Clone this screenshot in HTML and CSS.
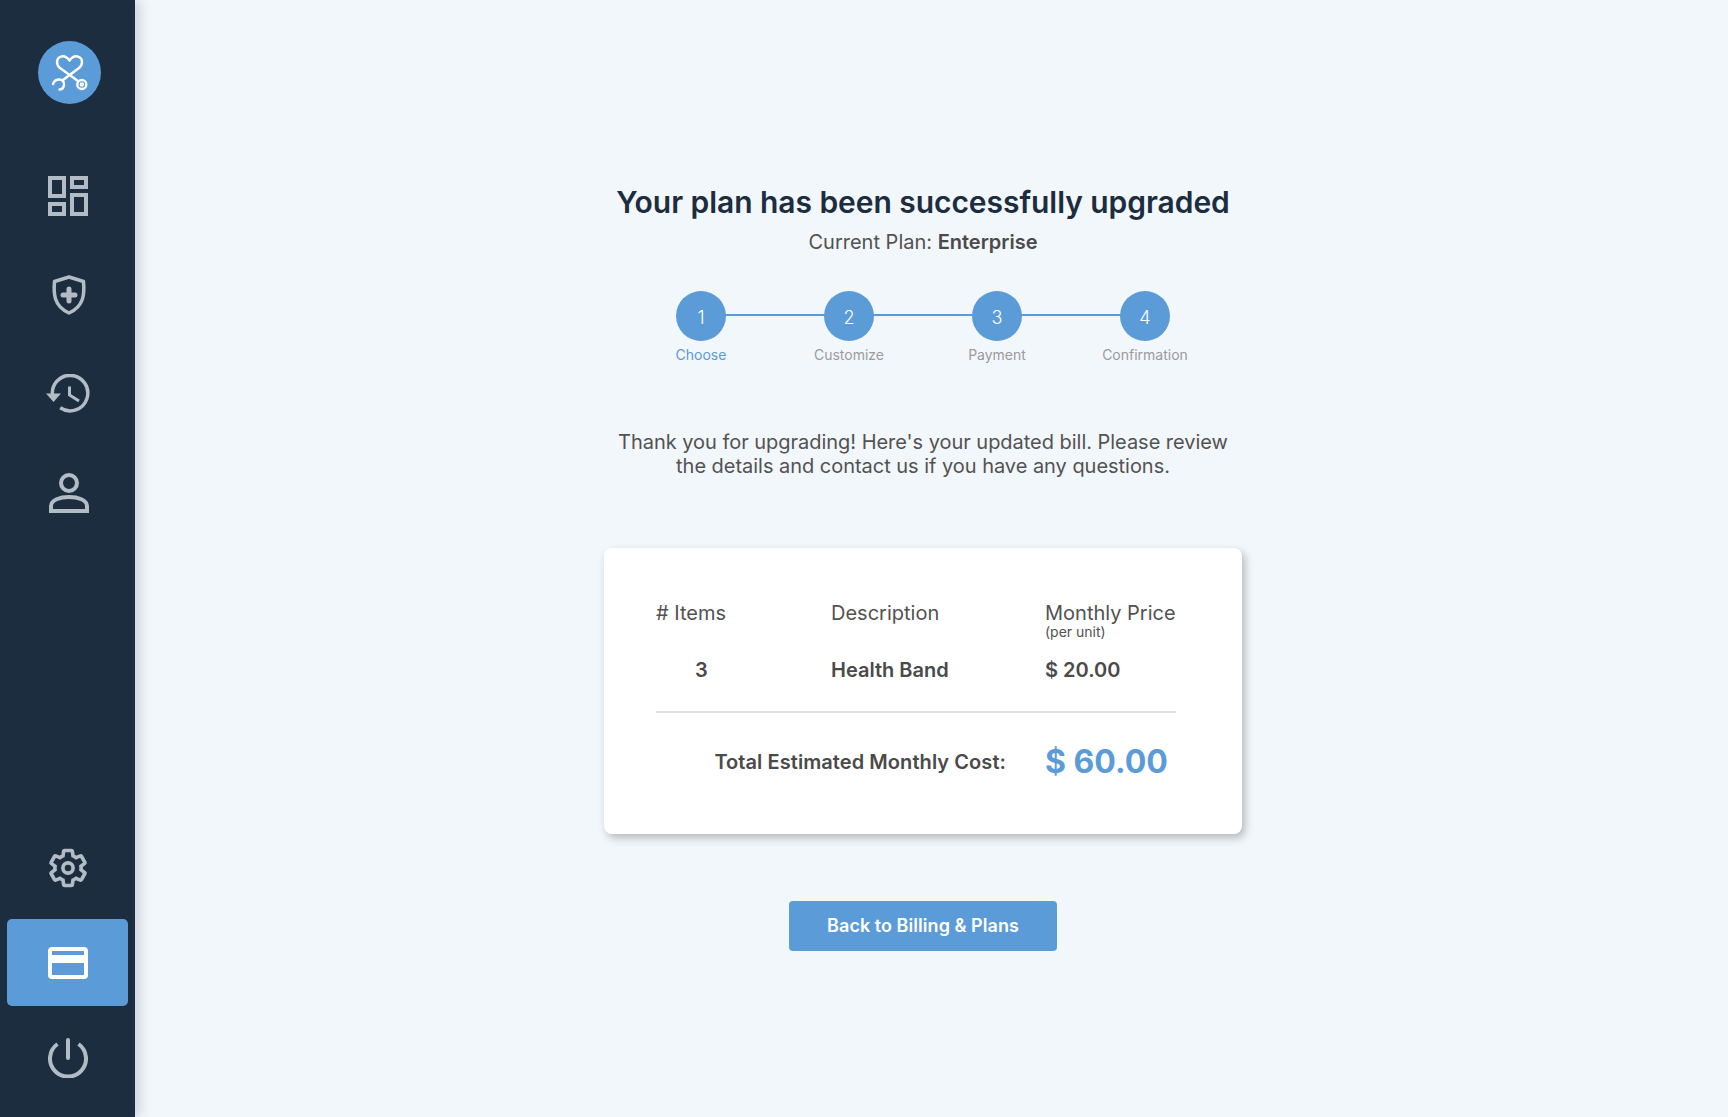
FILE: index.html
```html
<!DOCTYPE html>
<html lang="en">
<head>
    <meta charset="UTF-8">
    <title>Upgrade complete</title>
    <link rel="stylesheet" href="styles.css">
</head>
<body>
    <aside class="sidebar">
        <div class="logo">
            <svg width="40" height="40" viewBox="0 0 40 40" fill="none" stroke="#fff" stroke-width="2.400" stroke-linecap="round" stroke-linejoin="round">
                <path d="M28 28 L10 15 C6 11.500 6 6 10 4 C13.500 2.500 17 4 19.500 7.500 C22 4 25.500 2.500 29 4 C33 6 33 11.500 29 15 L13 27"/>
                <path d="M3 31 C4 28 7 26.500 9.500 26.500 C12.500 26.500 14.500 29 14 32 C13.500 35 11.500 36.500 9.500 36.500"/>
                <circle cx="31.800" cy="31.500" r="4.500"/>
                <circle cx="31.800" cy="31.500" r="1"/>
            </svg>
        </div>
        <nav class="nav-top">
            <a class="nav-icon">
                <svg width="40" height="40" viewBox="0 0 40 40" fill="none" stroke="#b3bcc5" stroke-width="4">
                    <rect x="2" y="2" width="14" height="18"/>
                    <rect x="2" y="28" width="14" height="10"/>
                    <rect x="24" y="2" width="14" height="9"/>
                    <rect x="24" y="19" width="14" height="19"/>
                </svg>
            </a>
            <a class="nav-icon shift">
                <svg width="40" height="40" viewBox="0 0 40 40" fill="none" stroke="#b3bcc5" stroke-width="3.500" stroke-linejoin="round">
                    <path d="M20 2 L34.500 6.500 C35.500 18 35.500 31 20 38 C4.500 31 4.500 18 5.500 6.500 Z"/>
                    <path d="M20 14 V26 M14 20 H26" stroke-width="5" stroke-linecap="round"/>
                </svg>
            </a>
            <a class="nav-icon shift">
                <svg width="46" height="40" viewBox="0 0 46 40" fill="none" stroke="#b3bcc5" stroke-width="3.500">
                    <path d="M6.800 23 A17.700 17.700 0 1 1 14.200 33.800"/>
                    <path d="M0 19.500 H15 L7.500 28 Z" fill="#b3bcc5" stroke="none"/>
                    <path d="M23.500 12.500 V21 L33 27" stroke-width="3"/>
                </svg>
            </a>
            <a class="nav-icon shift">
                <svg width="40" height="40" viewBox="0 0 40 40" fill="none" stroke="#b3bcc5" stroke-width="4">
                    <circle cx="20" cy="10" r="8"/>
                    <path d="M2 38 V33 C2 27 11 24 20 24 C29 24 38 27 38 33 V38 Z"/>
                </svg>
            </a>
        </nav>
        <nav class="nav-bottom">
            <a class="nav-icon">
                <svg width="40" height="40" viewBox="1 1 22 22" fill="none" stroke="#b3bcc5" stroke-width="2">
                    <path d="M19.140 12.940c.04-.3.06-.61.06-.94 0-.32-.02-.64-.07-.94l2.030-1.580c.18-.14.23-.41.12-.61l-1.920-3.320c-.12-.22-.37-.29-.59-.22l-2.390.96c-.5-.38-1.030-.7-1.620-.94l-.36-2.540c-.04-.24-.24-.41-.48-.41h-3.840c-.24 0-.43.17-.47.41l-.36 2.540c-.59.24-1.130.57-1.620.94l-2.390-.96c-.22-.08-.47 0-.59.22L2.740 8.870c-.12.21-.08.47.12.61l2.030 1.580c-.05.3-.09.63-.09.94s.02.64.07.94l-2.030 1.580c-.18.14-.23.41-.12.61l1.920 3.320c.12.22.37.29.59.22l2.390-.96c.5.38 1.030.7 1.620.94l.36 2.540c.05.24.24.41.48.41h3.840c.24 0 .44-.17.47-.41l.36-2.540c.59-.24 1.130-.56 1.620-.94l2.390.96c.22.08.47 0 .59-.22l1.920-3.320c.12-.22.07-.47-.12-.61l-2.010-1.580z"/>
                    <circle cx="12" cy="12" r="2.800"/>
                </svg>
            </a>
            <a class="nav-icon active">
                <svg width="40" height="32" viewBox="0 0 40 32" fill="none" stroke="#fff" stroke-width="4">
                    <rect x="2" y="2" width="36" height="28" rx="2"/>
                    <path d="M2 12 H38" stroke-width="8"/>
                </svg>
            </a>
            <a class="nav-icon">
                <svg width="40" height="40" viewBox="0 0 40 40" fill="none" stroke="#b3bcc5" stroke-width="4" stroke-linecap="round">
                    <path d="M9.500 6 A18 18 0 1 0 30.500 6" stroke-linecap="butt"/>
                    <path d="M20 2 V20"/>
                </svg>
            </a>
        </nav>
    </aside>

    <main class="main">
        <h1 class="title">Your plan has been successfully upgraded</h1>
        <p class="current-plan">Current Plan: <b>Enterprise</b></p>

        <ul class="steps">
            <li class="step current"><span class="dot">1</span>Choose</li>
            <li class="step"><span class="dot">2</span>Customize</li>
            <li class="step"><span class="dot">3</span>Payment</li>
            <li class="step"><span class="dot">4</span>Confirmation</li>
        </ul>

        <p class="thanks">Thank you for upgrading! Here's your updated bill. Please review<br>the details and contact us if you have any questions.</p>

        <section class="bill">
            <div class="bill-head">
                <div># Items</div>
                <div>Description</div>
                <div>Monthly Price<small>(per unit)</small></div>
            </div>
            <div class="bill-row">
                <div class="qty">3</div>
                <div>Health Band</div>
                <div>$ 20.00</div>
            </div>
            <div class="bill-total">
                <div class="total-label">Total Estimated Monthly Cost:</div>
                <div class="total-value">$ 60.00</div>
            </div>
        </section>

        <a class="back-btn">Back to Billing &amp; Plans</a>
    </main>
</body>
</html>
```

FILE: styles.css
```css
* {
    box-sizing: border-box;
    margin: 0;
    padding: 0;
}

html, body {
    height: 100%;
}

body {
    background-color: #f2f7fb;
    color: #525252;
    display: flex;
    font-family: Inter, "Liberation Sans", sans-serif;
    overflow: hidden;
}

/* sidebar */
.sidebar {
    align-items: center;
    background-color: #1c2d3f;
    box-shadow: 4px 0 12px rgba(28, 45, 63, .2);
    display: flex;
    flex-direction: column;
    flex-shrink: 0;
    height: 100%;
    padding-top: 41px;
    width: 135px;
}

.logo {
    align-items: center;
    background-color: #5b9bd8;
    border-radius: 50%;
    display: flex;
    height: 63px;
    justify-content: center;
    margin-left: 4px;
    width: 63px;
}

.nav-top {
    display: flex;
    flex-direction: column;
    gap: 59px;
    margin-top: 72px;
}

.nav-bottom {
    align-items: center;
    display: flex;
    flex-direction: column;
    margin-top: auto;
    padding-bottom: 39px;
}

.nav-icon {
    align-items: center;
    display: flex;
    justify-content: center;
    height: 40px;
}

.nav-icon.shift {
    margin-left: 2px;
}

.nav-icon.active {
    background-color: #5b9bd8;
    border-radius: 5px;
    height: 87px;
    margin: 31px 0 32px;
    width: 121px;
}

/* main column */
.main {
    align-items: center;
    display: flex;
    flex: 1;
    flex-direction: column;
    padding: 182px 17px 0 0;
}

.title {
    color: #1c2d3f;
    font-size: 30px;
    font-weight: 600;
    letter-spacing: -.05px;
    line-height: 40px;
}

.current-plan {
    font-size: 20px;
    line-height: 24px;
    margin-top: 8px;
}

.current-plan b {
    color: #4a4a4a;
    font-weight: 600;
}

.steps {
    display: flex;
    list-style: none;
    margin-top: 37px;
    position: relative;
}

.steps::before {
    background-color: #5b9bd8;
    content: "";
    height: 2px;
    left: 74px;
    position: absolute;
    right: 74px;
    top: 23px;
}

.step {
    align-items: center;
    color: #9b9b9b;
    display: flex;
    flex-direction: column;
    font-size: 14px;
    line-height: 17px;
    position: relative;
    width: 148px;
}

.step.current {
    color: #5b9bd8;
}

.dot {
    align-items: center;
    background-color: #5b9bd8;
    border-radius: 50%;
    color: #fff;
    display: flex;
    font-size: 18px;
    font-weight: 300;
    height: 50px;
    justify-content: center;
    margin-bottom: 5px;
    padding-top: 2px;
    width: 50px;
}

.thanks {
    font-size: 20px;
    letter-spacing: -.03px;
    line-height: 24px;
    margin-top: 67px;
    text-align: center;
}

/* bill card */
.bill {
    background-color: #fff;
    border-radius: 8px;
    box-shadow: 3px 4px 8px rgba(0, 0, 0, .25);
    height: 286px;
    margin-top: 70px;
    padding: 53px 66px 0 52px;
    width: 638px;
}

.bill-head, .bill-row {
    display: grid;
    font-size: 20px;
    grid-template-columns: 175px 214px 1fr;
}

.bill-head {
    line-height: 24px;
}

.bill-head small {
    display: block;
    font-size: 14px;
    line-height: 14px;
}

.bill-row {
    border-bottom: 2px solid #dcdfe3;
    color: #4a4a4a;
    font-weight: 600;
    line-height: 24px;
    margin-top: 19px;
    padding-bottom: 29px;
}

.qty {
    padding-left: 39px;
}

.bill-total {
    align-items: center;
    display: flex;
    margin-top: 29px;
}

.total-label {
    color: #4a4a4a;
    font-size: 20px;
    font-weight: 600;
    letter-spacing: .07px;
    padding-right: 39px;
    text-align: right;
    width: 389px;
}

.total-value {
    color: #5b9bd8;
    font-size: 32px;
    font-weight: 700;
    line-height: 40px;
}

.back-btn {
    background-color: #5b9bd8;
    border-radius: 4px;
    color: #fff;
    font-size: 18px;
    font-weight: 600;
    letter-spacing: .05px;
    line-height: 50px;
    margin-top: 67px;
    text-align: center;
    width: 268px;
}
```
